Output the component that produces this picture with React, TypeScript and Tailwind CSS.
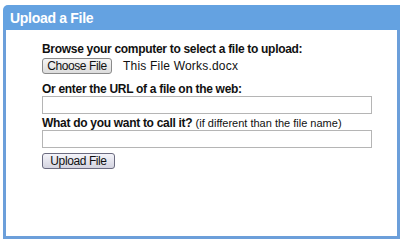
export default function App() {
  return (
    <div className="w-[400px] h-[249px] bg-white pt-[5px] pl-[3px] font-['Liberation_Sans',Arial,sans-serif] text-[#111]">
      <div className="w-[397px]">
        <div className="h-[25px] bg-[#64a2e1] rounded-tl-[5px] pl-[7px] flex items-center">
          <span className="text-white font-bold text-[14px] tracking-[-0.3px] leading-none">Upload a File</span>
        </div>
        <div className="h-[209px] border-[3px] border-t-0 border-[#6c9fda] bg-white pl-[36px] pt-[12px]">
          <div className="text-[12px] font-bold tracking-[-0.3px] leading-[14px]">Browse your computer to select a file to upload:</div>
          <div className="flex items-center gap-[11px] mt-[1px]">
            <button className="h-[16px] w-[70px] border border-[#8a8a8a] rounded-[3px] bg-gradient-to-b from-[#f6f6f6] to-[#dcdcdc] text-[12px] tracking-[-0.4px] leading-none text-[#111]">
              Choose File
            </button>
            <span className="text-[12px] tracking-[0.2px]">This File Works.docx</span>
          </div>
          <div className="text-[12px] font-bold tracking-[-0.3px] leading-[14px] mt-[7px]">Or enter the URL of a file on the web:</div>
          <div className="w-[330px] h-[18px] border border-[#b5b5b5]" />
          <div className="text-[12px] leading-[14px] mt-[2px]">
            <span className="font-bold tracking-[-0.3px]">What do you want to call it?</span>{" "}
            <span className="text-[11px]">(if different than the file name)</span>
          </div>
          <div className="w-[330px] h-[18px] border border-[#b5b5b5]" />
          <button className="h-[16px] w-[73px] mt-[3px] border border-[#6b6b80] rounded-[3px] bg-gradient-to-b from-[#f4f4fa] to-[#d4d4e0] text-[12px] tracking-[-0.4px] leading-none text-[#111]">
            Upload File
          </button>
        </div>
      </div>
    </div>
  );
}
